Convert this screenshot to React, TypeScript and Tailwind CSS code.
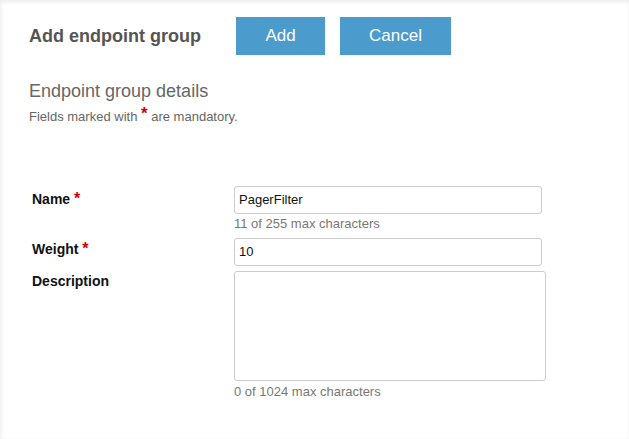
import React from "react";

export default function App() {
  return (
    <div
      className="w-[629px] h-[439px] bg-white text-[#555] shadow-[inset_1px_2px_4px_rgba(0,0,0,0.08)] overflow-hidden"
      style={{ fontFamily: '"Liberation Sans", Arial, sans-serif' }}
    >
      <div className="flex items-center pl-[29px] pt-[17px]">
        <h1 className="text-[18px] font-bold text-[#555] leading-[38px] w-[207px]">Add endpoint group</h1>
        <button className="w-[89px] h-[38px] bg-[#4b9bcd] text-white text-[17px]">Add</button>
        <button className="ml-[15px] w-[111px] h-[38px] bg-[#4b9bcd] text-white text-[17px]">Cancel</button>
      </div>
      <div className="pl-[29px] pt-[25px]">
        <h2 className="text-[18px] leading-[22px] text-[#666]">Endpoint group details</h2>
        <p className="mt-[6px] text-[13px] leading-[16px] text-[#666]">
          Fields marked with <span className="text-[#cc0000] text-[17px] font-bold relative top-[-2px]">*</span> are mandatory.
        </p>
      </div>
      <div className="pl-[32px] pt-[61px] grid grid-cols-[202px_1fr] text-[#111]">
        <label className="text-[14px] font-bold pt-[4px] leading-[18px]">
          Name <span className="text-[#cc0000] text-[16px]">*</span>
        </label>
        <div>
          <div className="w-[308px] h-[28px] border border-[#ccc] rounded-[3px] px-[4px] flex items-center text-[13px] text-[#111]">PagerFilter</div>
          <div className="text-[13px] text-[#777] leading-[16px] mt-[2px] mb-[6px]">11 of 255 max characters</div>
        </div>
        <label className="text-[14px] font-bold pt-[2px] leading-[18px]">
          Weight <span className="text-[#cc0000] text-[16px]">*</span>
        </label>
        <div>
          <div className="w-[308px] h-[28px] border border-[#ccc] rounded-[3px] px-[4px] flex items-center text-[13px] text-[#111]">10</div>
        </div>
        <label className="text-[14px] font-bold pt-[1px] mt-[5px] leading-[18px]">Description</label>
        <div className="mt-[5px]">
          <div className="w-[312px] h-[110px] border border-[#ccc] rounded-[3px]"></div>
          <div className="text-[13px] text-[#777] leading-[16px] mt-[3px]">0 of 1024 max characters</div>
        </div>
      </div>
    </div>
  );
}
